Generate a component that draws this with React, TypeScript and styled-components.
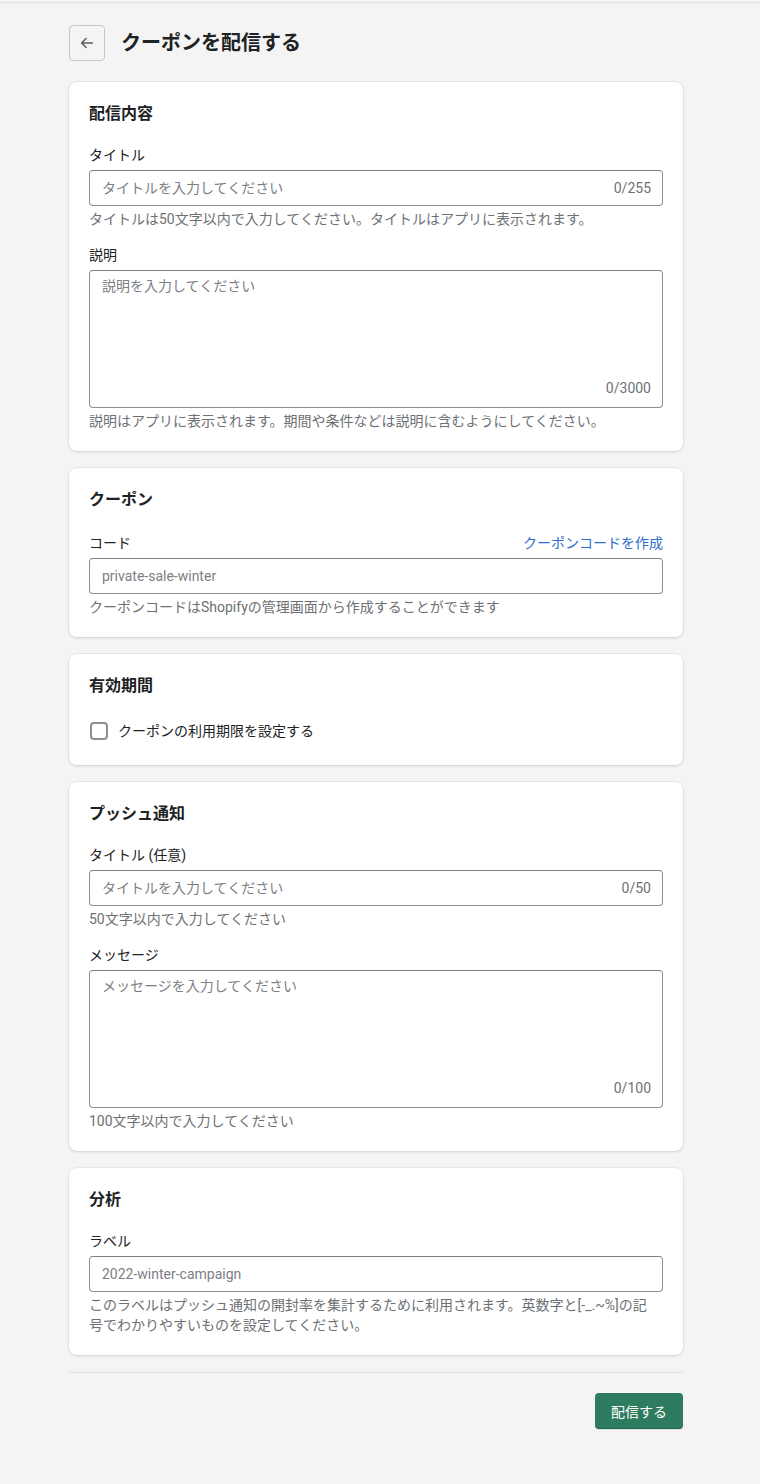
import React from 'react';
import styled, { createGlobalStyle } from 'styled-components';

const GlobalStyle = createGlobalStyle`
  html, body {
    margin: 0;
    padding: 0;
    background: #f4f4f4;
    min-height: 100%;
  }
  body {
    font-family: Roboto, "Noto Sans CJK JP", sans-serif;
    color: #202223;
    -webkit-font-smoothing: antialiased;
  }
  * {
    box-sizing: border-box;
  }
`;

const fields = {
  content: {
    title: { label: 'タイトル', placeholder: 'タイトルを入力してください', max: 255 },
    body: { label: '説明', placeholder: '説明を入力してください', max: 3000 }
  },
  push: {
    title: { label: 'タイトル (任意)', placeholder: 'タイトルを入力してください', max: 50 },
    body: { label: 'メッセージ', placeholder: 'メッセージを入力してください', max: 100 }
  }
};

const BackArrow = () => (
  <svg width="18" height="18" viewBox="0 0 20 20" fill="none">
    <path
      d="M16 10H4.5M9 5l-5 5 5 5"
      stroke="#5c5f62"
      strokeWidth="1.7"
      strokeLinecap="round"
      strokeLinejoin="round"
    />
  </svg>
);

type CounterProps = { max: number; placeholder: string };

const TextField = ({ max, placeholder }: CounterProps) => (
  <InputBox>
    <Input placeholder={placeholder} />
    <Counter>0/{max}</Counter>
  </InputBox>
);

const TextArea = ({ max, placeholder }: CounterProps) => (
  <AreaBox>
    <Area placeholder={placeholder} />
    <AreaCounter>0/{max}</AreaCounter>
  </AreaBox>
);

export default function App() {
  return (
    <>
      <GlobalStyle />
      <TopRule />
      <Page>
        <Header>
          <BackButton aria-label="戻る">
            <BackArrow />
          </BackButton>
          <PageTitle>クーポンを配信する</PageTitle>
        </Header>

        <Card>
          <CardTitle>配信内容</CardTitle>
          <Field>
            <Label>{fields.content.title.label}</Label>
            <TextField {...fields.content.title} />
            <Help>タイトルは50文字以内で入力してください。タイトルはアプリに表示されます。</Help>
          </Field>
          <Field>
            <Label>{fields.content.body.label}</Label>
            <TextArea {...fields.content.body} />
            <Help>説明はアプリに表示されます。期間や条件などは説明に含むようにしてください。</Help>
          </Field>
        </Card>

        <Card>
          <CardTitle>クーポン</CardTitle>
          <Field>
            <LabelRow>
              <Label>コード</Label>
              <Link href="#">クーポンコードを作成</Link>
            </LabelRow>
            <InputBox>
              <Input placeholder="private-sale-winter" />
            </InputBox>
            <Help>クーポンコードはShopifyの管理画面から作成することができます</Help>
          </Field>
        </Card>

        <Card>
          <CardTitle>有効期間</CardTitle>
          <CheckRow>
            <CheckBox type="checkbox" />
            <span>クーポンの利用期限を設定する</span>
          </CheckRow>
        </Card>

        <Card>
          <CardTitle>プッシュ通知</CardTitle>
          <Field>
            <Label>{fields.push.title.label}</Label>
            <TextField {...fields.push.title} />
            <Help>50文字以内で入力してください</Help>
          </Field>
          <Field>
            <Label>{fields.push.body.label}</Label>
            <TextArea {...fields.push.body} />
            <Help>100文字以内で入力してください</Help>
          </Field>
        </Card>

        <Card>
          <CardTitle>分析</CardTitle>
          <Field>
            <Label>ラベル</Label>
            <InputBox>
              <Input placeholder="2022-winter-campaign" />
            </InputBox>
            <Help $maxWidth={562}>
              このラベルはプッシュ通知の開封率を集計するために利用されます。英数字と[-_.~%]の記号でわかりやすいものを設定してください。
            </Help>
          </Field>
        </Card>

        <Footer>
          <PrimaryButton>配信する</PrimaryButton>
        </Footer>
      </Page>
    </>
  );
}

const TopRule = styled.div`
  height: 3px;
  border-bottom: 1px solid #e1e1e1;
`;

const Page = styled.main`
  width: 614px;
  margin: 0 0 0 69px;
  padding: 22px 0 56px;
  display: flex;
  flex-direction: column;
  gap: 17px;
`;

const Header = styled.div`
  display: flex;
  align-items: center;
  gap: 16px;
  margin-bottom: 4px;
`;

const BackButton = styled.button`
  width: 36px;
  height: 36px;
  display: flex;
  align-items: center;
  justify-content: center;
  padding: 0;
  background: transparent;
  border: 1px solid #c4c6c9;
  border-radius: 4px;
  cursor: pointer;
`;

const PageTitle = styled.h1`
  margin: 0;
  font-size: 20px;
  font-weight: 700;
  line-height: 28px;
  color: #202223;
`;

const Card = styled.section`
  background: #fff;
  border-radius: 8px;
  box-shadow: 0 0 0 1px rgba(63, 63, 68, 0.05), 0 1px 3px rgba(63, 63, 68, 0.15);
  padding: 20px 20px 20px;
  display: flex;
  flex-direction: column;
  gap: 16px;
`;

const CardTitle = styled.h2`
  margin: 0 0 3px;
  font-size: 16px;
  font-weight: 700;
  line-height: 24px;
`;

const Field = styled.div`
  display: flex;
  flex-direction: column;
`;

const LabelRow = styled.div`
  display: flex;
  justify-content: space-between;
  align-items: center;
  padding-top: 2px;
`;

const Label = styled.label`
  font-size: 14px;
  line-height: 20px;
  margin-bottom: 5px;
  color: #202223;
`;

const Link = styled.a`
  font-size: 14px;
  line-height: 20px;
  margin-bottom: 5px;
  color: #2c6ecb;
  text-decoration: none;
`;

const InputBox = styled.div`
  display: flex;
  align-items: center;
  height: 36px;
  border: 1px solid #8c9196;
  border-top-color: #7d8286;
  border-radius: 4px;
  padding: 0 11px 0 12px;
  background: #fff;
`;

const Input = styled.input`
  flex: 1;
  min-width: 0;
  border: 0;
  outline: none;
  padding: 0;
  font: inherit;
  font-size: 14px;
  color: #202223;
  background: transparent;
  &::placeholder {
    color: #7c8085;
  }
`;

const Counter = styled.span`
  font-size: 14px;
  color: #6d7175;
`;

const AreaBox = styled.div`
  position: relative;
  height: 138px;
  border: 1px solid #8c9196;
  border-top-color: #7d8286;
  border-radius: 4px;
  background: #fff;
`;

const Area = styled.textarea`
  display: block;
  width: 100%;
  height: 100%;
  border: 0;
  outline: none;
  resize: none;
  padding: 5px 12px;
  font: inherit;
  font-size: 14px;
  line-height: 20px;
  background: transparent;
  &::placeholder {
    color: #7c8085;
  }
`;

const AreaCounter = styled.span`
  position: absolute;
  right: 11px;
  bottom: 9px;
  font-size: 14px;
  line-height: 20px;
  color: #6d7175;
`;

const Help = styled.p<{ $maxWidth?: number }>`
  margin: 3px 0 0;
  max-width: ${(p) => (p.$maxWidth ? `${p.$maxWidth}px` : 'none')};
  font-size: 14px;
  line-height: 20px;
  color: #6d7175;
`;

const CheckRow = styled.label`
  display: flex;
  align-items: center;
  gap: 10px;
  font-size: 14px;
  line-height: 20px;
  margin: 4px 0 4px 1px;
  color: #202223;
`;

const CheckBox = styled.input`
  appearance: none;
  margin: 0;
  width: 18px;
  height: 18px;
  border: 2px solid #8c9196;
  border-radius: 4px;
  background: #fff;
`;

const Footer = styled.div`
  display: flex;
  justify-content: flex-end;
  border-top: 1px solid #dfe0e1;
  padding-top: 20px;
  margin-top: 0;
`;

const PrimaryButton = styled.button`
  height: 36px;
  padding: 0 16px;
  border: 0;
  border-radius: 4px;
  background: #2e7c5f;
  color: #fff;
  font: inherit;
  font-size: 14px;
  box-shadow: 0 1px 0 rgba(0, 0, 0, 0.08), inset 0 -1px 0 rgba(0, 0, 0, 0.2);
  cursor: pointer;
`;
